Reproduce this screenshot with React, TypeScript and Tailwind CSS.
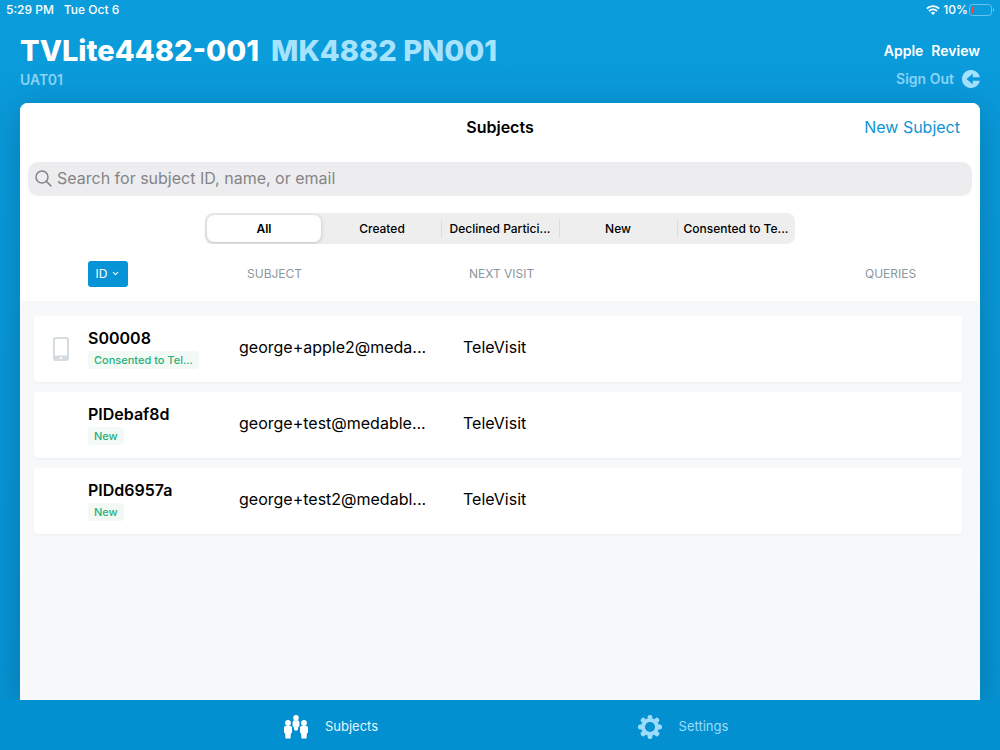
import { useState } from "react";
import { ChevronDown } from "lucide-react";

type Subject = { id: string; status: string; email: string; visit: string; device?: boolean };

const FILTERS = ["All", "Created", "Declined Partici...", "New", "Consented to Te..."];

const SUBJECTS: Subject[] = [
  { id: "S00008", status: "Consented to Tel...", email: "george+apple2@meda...", visit: "TeleVisit", device: true },
  { id: "PIDebaf8d", status: "New", email: "george+test@medable...", visit: "TeleVisit" },
  { id: "PIDd6957a", status: "New", email: "george+test2@medabl...", visit: "TeleVisit" },
];

const TEETH = [0, 45, 90, 135, 180, 225, 270, 315];

function WifiIcon() {
  return (
    <svg viewBox="0 0 14 10" className="w-[14px] h-[10px]" fill="none" stroke="currentColor" strokeWidth="1.8" aria-hidden="true">
      <path d="M0.8 3.6 A8.8 8.8 0 0 1 13.2 3.6" />
      <path d="M3 6 A5.7 5.7 0 0 1 11 6" />
      <path d="M7 9.9 L4.9 7.8 A3 3 0 0 1 9.1 7.8 Z" fill="currentColor" stroke="none" />
    </svg>
  );
}

function BatteryIcon() {
  return (
    <svg viewBox="0 0 26 12" className="w-[26px] h-[12px]" aria-hidden="true">
      <rect x="0.5" y="0.5" width="22" height="11" rx="3" fill="none" stroke="#6cc3ec" />
      <rect x="2" y="2.5" width="2" height="7" rx="0.8" fill="#ff4236" />
      <path d="M24 4 C25.8 4.6 25.8 7.4 24 8 Z" fill="#6cc3ec" />
    </svg>
  );
}

function SignOutIcon() {
  return (
    <svg viewBox="0 0 18 18" className="w-[18px] h-[18px]" aria-hidden="true">
      <path
        fill="currentColor"
        fillRule="evenodd"
        d="M17.8 7.3 A9 9 0 1 0 17.8 10.7 H10.8 V14.2 L4.4 9 L10.8 3.8 V7.3 Z"
      />
    </svg>
  );
}

function SearchIcon() {
  return (
    <svg viewBox="0 0 17 17" className="w-[17px] h-[17px] shrink-0" fill="none" stroke="currentColor" strokeWidth="1.5" strokeLinecap="round" aria-hidden="true">
      <circle cx="7" cy="7" r="6" />
      <path d="M11.4 11.4 L16 16" />
    </svg>
  );
}

function TabletIcon() {
  return (
    <svg viewBox="0 0 16 24" className="w-4 h-6" role="img" aria-label="Device">
      <path
        fill="#d5dcdf"
        fillRule="evenodd"
        d="M2.5 0 H13.5 A2.5 2.5 0 0 1 16 2.5 V21.5 A2.5 2.5 0 0 1 13.5 24 H2.5 A2.5 2.5 0 0 1 0 21.5 V2.5 A2.5 2.5 0 0 1 2.5 0 Z M3 2 A1 1 0 0 0 2 3 V18.5 H14 V3 A1 1 0 0 0 13 2 Z M8 20 A1.1 1.1 0 1 0 8 22.2 A1.1 1.1 0 1 0 8 20 Z"
      />
    </svg>
  );
}

function PeopleIcon() {
  const side = "M1.6 6.5 H6.4 Q8 6.5 8 8.2 V13 L6.9 14 L6.5 19 H1.5 L1.1 14 L0 13 V8.2 Q0 6.5 1.6 6.5 Z";
  return (
    <svg viewBox="0 0 24 24" className="w-6 h-6" fill="currentColor" aria-hidden="true">
      <circle cx="12" cy="2.8" r="2.8" />
      <path d="M10.2 5.2 H13.8 Q15.4 5.6 15.4 7.5 V11 L14.4 12 L13.6 15.5 H10.4 L9.6 12 L8.6 11 V7.5 Q8.6 5.6 10.2 5.2 Z" />
      <circle cx="4" cy="8" r="2.9" />
      <path d={side} transform="translate(0 4.6)" />
      <circle cx="20" cy="8" r="2.9" />
      <path d={side} transform="translate(16 4.6)" />
    </svg>
  );
}

function GearIcon() {
  return (
    <svg viewBox="0 0 24 24" className="w-6 h-6" fill="currentColor" aria-hidden="true">
      <circle cx="12" cy="12" r="7" fill="none" stroke="currentColor" strokeWidth="4" />
      {TEETH.map(a => (
        <rect key={a} x="9.6" y="0" width="4.8" height="5" rx="2" transform={`rotate(${a} 12 12)`} />
      ))}
    </svg>
  );
}

export default function App() {
  const [filter, setFilter] = useState("All");
  const [query, setQuery] = useState("");

  return (
    <div className="flex min-h-screen flex-col overflow-hidden bg-linear-to-b from-[#0b9cdc] to-[#0694d4] font-['Inter',sans-serif] text-black">
      {/* Status bar */}
      <div className="flex h-5 items-center justify-between pl-[6px] pr-[5px] text-[12px] font-medium text-white">
        <div className="flex gap-[10px]">
          <span>5:29 PM</span>
          <span>Tue Oct 6</span>
        </div>
        <div className="flex items-center">
          <WifiIcon />
          <span className="ml-[3px] mr-px">10%</span>
          <BatteryIcon />
        </div>
      </div>

      <header className="flex h-[83px] justify-between px-5 pt-3">
        <div>
          <h1 className="flex gap-3 text-[29px] leading-[38px] font-extrabold text-white">
            <span>TVLite4482-001</span>
            <span className="text-[#a6e3ff]">MK4882 PN001</span>
          </h1>
          <p className="text-[14px] leading-5 font-semibold text-[#8ad6f8]">UAT01</p>
        </div>
        <div className="flex flex-col items-end pt-[5px] font-semibold">
          <div className="flex gap-2 text-[14px] leading-7 text-white">
            <span>Apple</span>
            <span>Review</span>
          </div>
          <button type="button" className="flex items-center gap-2 text-[14px] leading-7 text-[#8ad6f8]">
            Sign Out <span className="text-[#a6e3ff]"><SignOutIcon /></span>
          </button>
        </div>
      </header>

      <main className="mx-5 flex flex-1 flex-col overflow-hidden rounded-t-lg bg-[#f7f8fa] shadow-[0_8px_36px_4px_rgba(0,50,80,0.26)]">
        <div className="bg-white px-2">
          <div className="grid h-[59px] grid-cols-3 items-center px-3 pb-3">
            <h2 className="col-start-2 text-center text-[16px] leading-5 font-semibold">Subjects</h2>
            <button type="button" className="justify-self-end text-[16px] leading-5 text-[#1195d3]">New Subject</button>
          </div>

          <label className="flex h-[34px] items-center gap-[5px] rounded-[10px] bg-[#ededef] px-[7px] pb-[2px] text-[#848487]">
            <SearchIcon />
            <input
              type="text"
              aria-label="Search subjects"
              value={query}
              onChange={e => setQuery(e.target.value)}
              placeholder="Search for subject ID, name, or email"
              className="w-full bg-transparent text-[16px] text-black outline-none placeholder:text-[#848487]"
            />
          </label>

          <div className="mx-auto mt-[17px] grid h-[31px] w-[590px] max-w-full grid-cols-5 rounded-lg bg-[#eeeeef] py-[2px]">
            {FILTERS.map((f, i) => (
              <div key={f} className="flex items-center">
                <span className={`h-[18px] w-px ${i > 1 ? "bg-[#dcdcde]" : ""}`} />
                <button
                  type="button"
                  aria-pressed={f === filter}
                  onClick={() => setFilter(f)}
                  className={`mr-[2px] ml-px h-full flex-1 rounded-[7px] text-center text-[12px] whitespace-nowrap ${
                    f === filter ? "bg-white font-semibold shadow-[0_1px_4px_rgba(0,0,0,0.2)]" : "font-medium"
                  }`}
                >
                  {f}
                </button>
              </div>
            ))}
          </div>
        </div>

        <table className="block">
          <thead className="block bg-white">
            <tr className="grid h-[57px] grid-cols-[68px_159px_222px_1fr_115px] items-center pt-[2px] text-left text-[12px] text-[#8b979e]">
              <td />
              <th className="font-normal">
                <button type="button" className="flex h-[26px] w-10 items-center justify-center gap-1 rounded-[3px] bg-[#0794d6] text-white">
                  ID <ChevronDown className="h-[9px] w-[9px]" strokeWidth={3} />
                </button>
              </th>
              <th className="font-normal">SUBJECT</th>
              <th className="font-normal">NEXT VISIT</th>
              <th className="font-normal">QUERIES</th>
            </tr>
          </thead>
          <tbody className="flex flex-col gap-[10px] py-[15px] pr-[18px] pl-[14px]">
            {SUBJECTS.map(s => (
              <tr
                key={s.id}
                className="grid h-[66px] grid-cols-[54px_151px_224px_1fr] items-center rounded-[4px] bg-white text-[16px] shadow-[0_1px_2px_rgba(0,0,0,0.05)]"
              >
                <td className="flex justify-center">{s.device && <TabletIcon />}</td>
                <td className="pb-[2px]">
                  <div className="leading-[22px] font-semibold">{s.id}</div>
                  <div className="mt-[2px] w-fit rounded-[3px] bg-[#f3faf6] px-[6px] text-[11px] leading-[18px] font-medium text-[#27b07a]">
                    {s.status}
                  </div>
                </td>
                <td className="pb-1">{s.email}</td>
                <td className="pb-1">{s.visit}</td>
              </tr>
            ))}
          </tbody>
        </table>
      </main>

      <nav className="z-10 flex h-[50px] bg-[#0290d1] pt-[3px] text-[13px]">
        <a href="#subjects" className="flex w-1/2 items-center justify-center gap-[17px] pl-[162px] text-[#e6f6ff]">
          <span className="text-white"><PeopleIcon /></span>
          Subjects
        </a>
        <a href="#settings" className="flex w-1/2 items-center justify-center gap-[17px] pr-[134px] text-[#9bdcfb]">
          <GearIcon />
          Settings
        </a>
      </nav>
    </div>
  );
}
